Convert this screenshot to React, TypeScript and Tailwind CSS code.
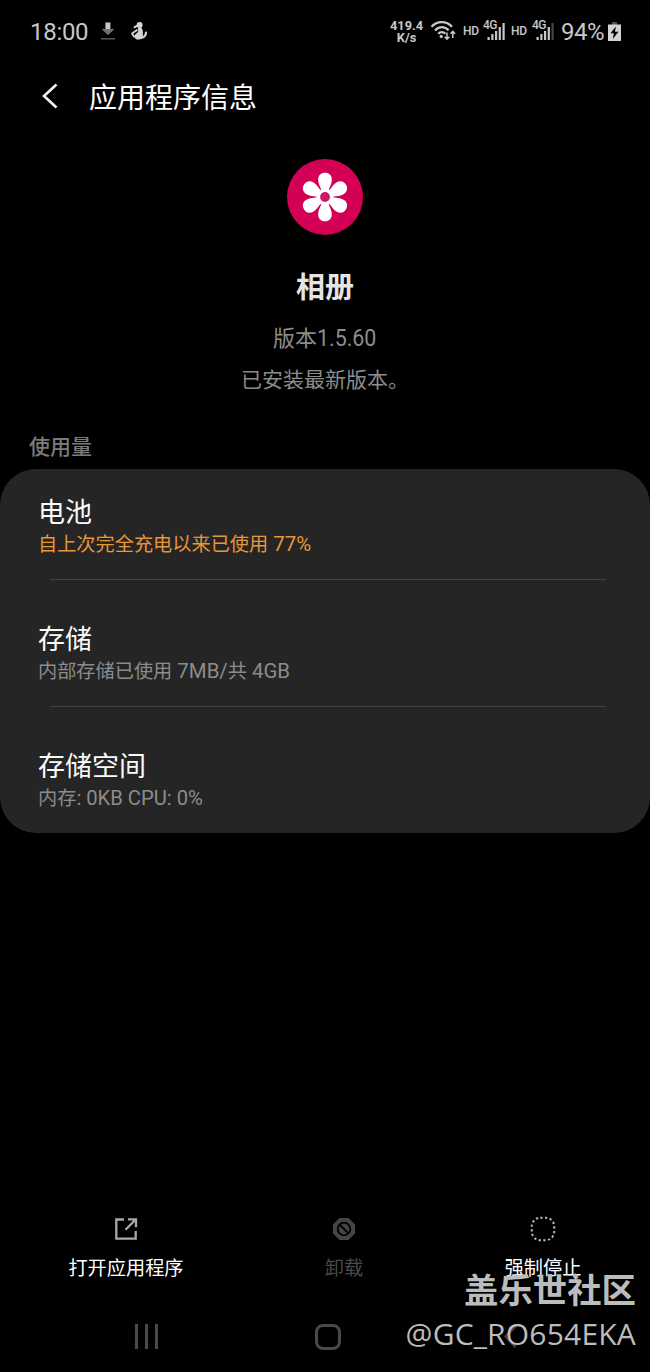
/**
 * App.tsx
 * Application info screen (dark theme).
 */

import type { ReactNode } from 'react';

interface UsageRow {
  title: string;
  summary: ReactNode;
  accent?: boolean;
}

const usageRows: UsageRow[] = [
  {
    title: '电池',
    summary: (
      <>
        自上次完全充电以来已使用<span className="text-[20.4px]"> 77%</span>
      </>
    ),
    accent: true,
  },
  {
    title: '存储',
    summary: (
      <>
        内部存储已使用<span className="text-[20.4px]"> 7MB/</span>共<span className="text-[20.4px]"> 4GB</span>
      </>
    ),
  },
  {
    title: '存储空间',
    summary: (
      <>
        内存<span className="text-[20.2px]">: 0KB CPU: 0%</span>
      </>
    ),
  },
];

function SignalIcon({ weak = false }: { weak?: boolean }) {
  return (
    <div className="relative w-[24px] h-[24px] text-[#c8c8c8]">
      <span className="absolute left-0 top-0 text-[12px] leading-[12px] font-medium tracking-[-0.5px]">4G</span>
      <svg className="absolute left-0 top-0" width="24" height="24" viewBox="0 0 24 24" fill="currentColor">
        <rect x="4.5" y="18" width="2.2" height="3" />
        <rect x="8.3" y="15" width="2.2" height="6" />
        <rect x="12" y="12" width="2.2" height="9" />
        <rect x="15.7" y="8" width="2.2" height="13" />
        <rect x="19.5" y="4" width="2.2" height="17" opacity={weak ? 0.35 : 1} />
      </svg>
    </div>
  );
}

function StatusBar() {
  return (
    <div className="h-[62px] flex items-center justify-between pl-[30px] pr-[29px] text-[#c8c8c8]">
      <div className="flex items-center">
        <span className="mt-[2px] text-[24px] leading-[28px] w-[70px] tracking-[-0.3px]">18:00</span>
        <svg width="16" height="20" viewBox="0 0 16 20">
          <path d="M5.4 1.5h5V8h-5z" fill="#c8c8c8" />
          <path d="M1.5 8h13L8 14.2z" fill="#707070" />
          <path d="M1 17.8h14" stroke="#505050" strokeWidth="1.6" />
        </svg>
        <svg className="ml-[14px]" width="18" height="20" viewBox="0 0 18 20" fill="none">
          <circle cx="9.6" cy="4" r="3" fill="#d4d4d4" />
          <path d="M7.6 4.6 4.6 6.2" stroke="#d4d4d4" strokeWidth="2" strokeLinecap="round" />
          <path d="M8 6.5h3.4c1.200 2 1.800 4 1.500 6.300.4 2.700-.6 5.800-4.400 5.800-3 0-4.200-1.700-4-3.700C4.800 13 8 12 8.300 10.300 8.500 9 7.500 8 8 6.500z" fill="#d4d4d4" />
          <path d="M7.500 8.800 2 12.600l2.500 3.600" stroke="#d4d4d4" strokeWidth="1.800" strokeLinejoin="round" />
          <path d="M11 17c3.200-.5 4.800-2.400 5-5.300" stroke="#d4d4d4" strokeWidth="2.200" strokeLinecap="round" />
        </svg>
      </div>

      <div className="flex items-center">
        <div className="w-[33px] mt-[1px] mr-[1px] text-center text-[12.8px] leading-[11.5px] font-bold">
          <div>419.4</div>
          <div>K/s</div>
        </div>
        <svg className="ml-[6px] mr-[1px]" width="27" height="22" viewBox="0 0 27 22" fill="none" stroke="currentColor" strokeWidth="2.2">
          <path d="M1.5 6.8C7 .6 16.5.6 22 6.8" />
          <path d="M5 10.4c4-4.4 9.8-4.4 13.6 0" />
          <path d="M8.2 13.8c2.2-2.3 5-2.3 7.2 0" />
          <circle cx="11.2" cy="16.4" r="1.6" fill="currentColor" stroke="none" />
          <path d="M17 12.5V19M14.7 16.8l2.3 2.3 2.3-2.3M22.800 18v-6.500M20.500 13.700l2.300-2.300 2.300 2.300" strokeWidth="1.5" />
        </svg>
        <span className="ml-[5px] w-[20px] text-[12px] leading-[12px] font-medium tracking-[-0.3px]">HD</span>
        <SignalIcon />
        <span className="ml-[4px] w-[21px] text-[12px] leading-[12px] font-medium tracking-[-0.3px]">HD</span>
        <SignalIcon weak />
        <span className="ml-[5px] mt-[2px] w-[46px] text-[24px] leading-[28px] tracking-[-0.5px]">94%</span>
        <svg className="ml-[1px]" width="13" height="19" viewBox="0 0 13 19">
          <path d="M4 0h5v3H4z" fill="#505050" />
          <path d="M0 2.500h13V19H0z" fill="#d4d4d4" />
          <path d="M7.800 4.500 2.500 11.300h3.300L4.800 17l5.700-7.200H7z" fill="#000" />
        </svg>
      </div>
    </div>
  );
}

function GalleryIcon() {
  return (
    <svg width="76" height="76" viewBox="-38 -38 76 76">
      <circle r="38" fill="#d30056" />
      {[0, 60, 120, 180, 240, 300].map((angle) => (
        <path
          key={angle}
          transform={`rotate(${angle})`}
          d="M-2.5-3C-3-8-6.800-12-6.800-17.500C-6.800-21.800-4-24.300 0-24.300S6.800-21.800 6.800-17.500C6.800-12 3-8 2.500-3z"
          fill="#fff"
        />
      ))}
      <circle r="8.500" fill="#fff" />
      <circle r="4.900" fill="#c8186a" />
    </svg>
  );
}

export default function App() {
  return (
    <div className="relative w-[650px] h-[1372px] overflow-hidden bg-black text-white flex flex-col font-[Roboto,'Noto_Sans_CJK_SC',sans-serif]">
      <StatusBar />

      {/* Title bar */}
      <header className="h-[70px] flex items-center pl-[42px]">
        <svg className="mt-[-2px]" width="16" height="26" viewBox="0 0 16 26" fill="none" stroke="#f4f4f4" strokeWidth="2.6">
          <path d="M14.5 1.5 2 13l12.5 11.5" />
        </svg>
        <h1 className="ml-[31px] mt-[4px] text-[28px] leading-[40px]">应用程序信息</h1>
      </header>

      {/* App summary */}
      <section className="h-[297px] pt-[27px] flex flex-col items-center">
        <GalleryIcon />
        <h2 className="mt-[33px] text-[29px] leading-[40px] font-bold text-[#e4e4e4]">相册</h2>
        <p className="mt-[16px] text-[22px] leading-[30px] text-[#8c8c8c]">
          版本<span className="inline-block origin-left scale-x-[0.93] mr-[-4px] text-[23px]">1.5.60</span>
        </p>
        <p className="mt-[11px] text-[21px] leading-[30px] text-[#8c8c8c]">已安装最新版本。</p>
      </section>

      {/* Usage */}
      <h3 className="h-[40px] pl-[29px] pt-[3px] text-[21px] leading-[30px] font-medium text-[#7c7c7c]">使用量</h3>
      <section className="h-[364px] shrink-0 rounded-[36px] bg-[#252525] pt-[28px]">
        {usageRows.map((row, i) => (
          <div key={row.title}>
            <div className="h-[82px] pl-[38px]">
              <div className="text-[27px] leading-[32px] text-[#fafafa]">{row.title}</div>
              <div className={`mt-px text-[19.2px] leading-[28px] ${row.accent ? 'text-[#e8963a]' : 'text-[#8c8c8c]'}`}>
                {row.summary}
              </div>
            </div>
            {i < usageRows.length - 1 && <div className="ml-[50px] mr-[44px] mb-[44px] h-px bg-[#404040]" />}
          </div>
        ))}
      </section>

      {/* Bottom actions */}
      <footer className="mt-auto h-[88px] flex text-[19.2px] leading-[28px]">
        <div className="w-[252px] flex flex-col items-center">
          <svg width="24" height="24" viewBox="0 0 24 24" fill="none" stroke="#a8a8a8" strokeWidth="2.3">
            <path d="M10 2.500H2.300v19.200H21.700v-7.700" />
            <path d="M14 2.300h8v8M21.500 2.800 11.500 12.800" />
          </svg>
          <span className="mt-[14px]">打开应用程序</span>
        </div>
        <div className="w-[184px] flex flex-col items-center text-[#4a4a4a]">
          <svg width="24" height="24" viewBox="0 0 24 24">
            <path d="M7.5 1h9L23 7.5v9L16.5 23h-9L1 16.5v-9z" fill="#444" />
            <circle cx="12" cy="12" r="6.3" fill="none" stroke="#000" strokeWidth="1.8" />
            <path d="m7.5 7.5 9 9" stroke="#000" strokeWidth="1.8" />
          </svg>
          <span className="mt-[14px]">卸载</span>
        </div>
        <div className="w-[214px] flex flex-col items-center">
          <svg width="26" height="24" viewBox="0 1 26 24" fill="none" overflow="visible">
            <rect x="1.8" y="1.8" width="22.4" height="22.4" rx="8.5" stroke="#b8b8b8" strokeWidth="2" strokeDasharray="2.300 2.380" />
          </svg>
          <span className="mt-[14px]">强制停止</span>
        </div>
      </footer>

      {/* System navigation */}
      <nav className="h-[67px] flex pt-[19px]">
        <div className="w-[292px] flex justify-center gap-[7px] pl-[1px]">
          <span className="w-[3px] h-[25px] bg-[#4c474a]" />
          <span className="w-[3px] h-[25px] bg-[#4c474a]" />
          <span className="w-[3px] h-[25px] bg-[#4c474a]" />
        </div>
        <div className="w-[72px] flex justify-center">
          <span className="w-[26px] h-[26px] rounded-[8px] border-[3px] border-[#4c474a]" />
        </div>
        <svg className="ml-[140px]" width="13" height="25" viewBox="0 0 13 25" fill="none" stroke="#403c3f" strokeWidth="3">
          <path d="M11.5 2 2 12.5 11.5 23" />
        </svg>
      </nav>

      {/* Community watermark */}
      <div className="absolute right-[14px] top-[1269px] flex flex-col items-end text-[#bcbcbc] whitespace-nowrap">
        <div className="text-[34.4px] leading-[44px] font-bold">盖乐世社区</div>
        <div className="mt-[-1px] text-[30px] leading-[44px] tracking-[0.2px] font-['Open_Sans',sans-serif]">@GC_RO654EKA</div>
      </div>
    </div>
  );
}
